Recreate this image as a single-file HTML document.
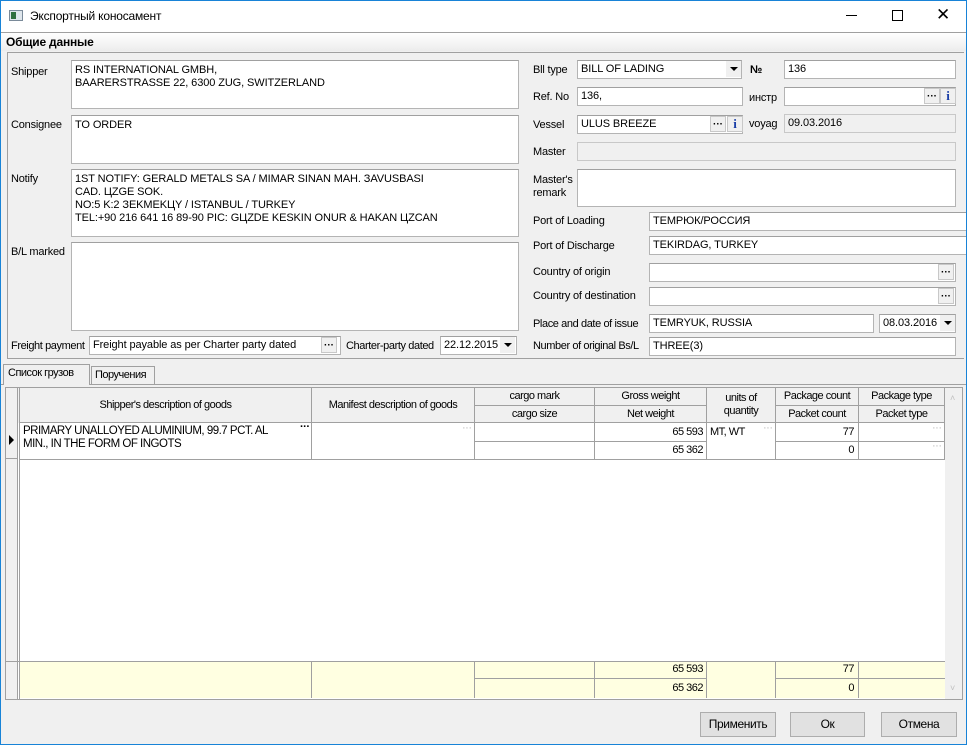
<!DOCTYPE html>
<html><head><meta charset="utf-8"><style>
*{box-sizing:border-box;margin:0;padding:0}
body{width:967px;height:745px;background:#f0f0f0;font-family:"Liberation Sans",sans-serif;font-size:11px;color:#000;position:relative;overflow:hidden}
.a{position:absolute}
.win{position:absolute;left:0;top:0;width:967px;height:745px;border:1px solid #1883d7;pointer-events:none;z-index:9}
.in{position:absolute;background:#fff;border:1px solid #b4b4b4;border-top-color:#a0a0a0;padding:2px 3px;font-size:11px;white-space:nowrap;overflow:hidden;letter-spacing:-0.1px}
.dis{background:#f0f0f0;border-color:#c8c8c8}
.lb{position:absolute;font-size:11px;white-space:nowrap;letter-spacing:-0.2px}
.btn{position:absolute;width:16px;height:16px;background:#f0f0f0;border:1px solid #c8c8c8;font-size:10px;line-height:15px;text-align:center;font-weight:bold}
.i{color:#1a3ea8;font-family:"Liberation Serif",serif;font-size:13px;line-height:14px}
.dd{position:absolute;width:15px;height:16px;background:#f0f0f0}
.dd:after{content:"";position:absolute;left:4px;top:6px;border-left:4px solid transparent;border-right:4px solid transparent;border-top:4px solid #000}
.g{position:absolute;font-size:11px;letter-spacing:-0.5px;white-space:nowrap}
.c{position:absolute;border-right:1px solid #a0a0a0;border-bottom:1px solid #a0a0a0;font-size:11px;letter-spacing:-0.5px;white-space:nowrap}
.pb{position:absolute;height:25px;background:#e1e1e1;border:1px solid #adadad;text-align:center;line-height:23px;font-size:12px;letter-spacing:-0.4px}
</style></head><body>
<div class="win"></div>
<div class="a" style="left:1px;top:1px;width:965px;height:31px;background:#fff"></div>
<div class="a" style="left:9px;top:10px;width:14px;height:11px;background:#dfe6ec;border:1px solid #7a8a99"><div class="a" style="left:1px;top:1px;width:5px;height:7px;background:#2f6f3f"></div></div>
<div class="lb" style="left:30px;top:9px;font-size:12px">Экспортный коносамент</div>
<div class="a" style="left:846px;top:15px;width:11px;height:1px;background:#000"></div>
<div class="a" style="left:892px;top:10px;width:11px;height:11px;border:1px solid #000"></div>
<div class="lb" style="left:936px;top:5px;font-size:17px;font-weight:300">✕</div>
<div class="a" style="left:1px;top:32px;width:965px;height:19px;background:linear-gradient(#fff,#ececec);border-top:1px solid #a0a0a0"></div>
<div class="lb" style="left:6px;top:35px;font-weight:bold;font-size:12px">Общие данные</div>
<div class="a" style="left:7px;top:52px;width:957px;height:307px;border:1px solid #a0a0a0;border-right:none"></div>

<div class="lb" style="left:11px;top:66px">Shipper</div>
<div class="in" style="left:71px;top:60px;width:448px;height:49px;line-height:13px;padding-top:3px">RS INTERNATIONAL GMBH,<br>BAARERSTRASSE 22, 6300 ZUG, SWITZERLAND</div>
<div class="lb" style="left:11px;top:119px">Consignee</div>
<div class="in" style="left:71px;top:115px;width:448px;height:49px;padding-top:3px">TO ORDER</div>
<div class="lb" style="left:11px;top:173px">Notify</div>
<div class="in" style="left:71px;top:169px;width:448px;height:68px;line-height:13px;padding-top:3px">1ST NOTIFY: GERALD METALS SA / MIMAR SINAN MAH. ЗAVUSBASI<br>CAD. ЦZGE SOK.<br>NO:5 K:2 ЗEKMEKЦY / ISTANBUL / TURKEY<br>TEL:+90 216 641 16 89-90 PIC: GЦZDE KESKIN ONUR &amp; HAKAN ЦZCAN</div>
<div class="lb" style="left:11px;top:246px">B/L marked</div>
<div class="in" style="left:71px;top:242px;width:448px;height:89px"></div>
<div class="lb" style="left:11px;top:340px;letter-spacing:-0.4px">Freight payment</div>
<div class="in" style="left:89px;top:336px;width:252px;height:19px">Freight payable as per Charter party dated</div>
<div class="btn" style="left:321px;top:337px">···</div>
<div class="lb" style="left:346px;top:340px;letter-spacing:-0.4px">Charter-party dated</div>
<div class="in" style="left:440px;top:336px;width:77px;height:19px">22.12.2015</div>
<div class="dd" style="left:500px;top:337px"></div>

<div class="lb" style="left:533px;top:64px">Bll type</div>
<div class="in" style="left:577px;top:60px;width:165px;height:19px">BILL OF LADING</div>
<div class="dd" style="left:726px;top:61px"></div>
<div class="lb" style="left:750px;top:64px;font-weight:bold">№</div>
<div class="in" style="left:784px;top:60px;width:172px;height:19px">136</div>
<div class="lb" style="left:533px;top:91px">Ref. No</div>
<div class="in" style="left:577px;top:87px;width:166px;height:19px">136,</div>
<div class="lb" style="left:749px;top:92px">инстр</div>
<div class="in" style="left:784px;top:87px;width:172px;height:19px"></div>
<div class="btn" style="left:924px;top:88px">···</div>
<div class="btn i" style="left:940px;top:88px">i</div>
<div class="lb" style="left:533px;top:119px">Vessel</div>
<div class="in" style="left:577px;top:115px;width:166px;height:19px">ULUS BREEZE</div>
<div class="btn" style="left:710px;top:116px">···</div>
<div class="btn i" style="left:727px;top:116px">i</div>
<div class="lb" style="left:749px;top:118px">voyag</div>
<div class="in dis" style="left:784px;top:114px;width:172px;height:19px">09.03.2016</div>
<div class="lb" style="left:533px;top:146px">Master</div>
<div class="in dis" style="left:577px;top:142px;width:379px;height:19px"></div>
<div class="lb" style="left:533px;top:174px;line-height:13px">Master's<br>remark</div>
<div class="in" style="left:577px;top:169px;width:379px;height:38px"></div>
<div class="lb" style="left:533px;top:215px">Port of Loading</div>
<div class="in" style="left:649px;top:212px;width:320px;height:19px">ТЕМРЮК/РОССИЯ</div>
<div class="lb" style="left:533px;top:240px">Port of Discharge</div>
<div class="in" style="left:649px;top:236px;width:320px;height:19px">TEKIRDAG, TURKEY</div>
<div class="lb" style="left:533px;top:266px">Country of origin</div>
<div class="in" style="left:649px;top:263px;width:307px;height:19px"></div>
<div class="btn" style="left:938px;top:264px">···</div>
<div class="lb" style="left:533px;top:290px">Country of destination</div>
<div class="in" style="left:649px;top:287px;width:307px;height:19px"></div>
<div class="btn" style="left:938px;top:288px">···</div>
<div class="lb" style="left:533px;top:318px;letter-spacing:-0.4px">Place and date of issue</div>
<div class="in" style="left:649px;top:314px;width:225px;height:19px">TEMRYUK, RUSSIA</div>
<div class="in" style="left:879px;top:314px;width:77px;height:19px">08.03.2016</div>
<div class="dd" style="left:940px;top:315px"></div>
<div class="lb" style="left:533px;top:340px;letter-spacing:-0.4px">Number of original Bs/L</div>
<div class="in" style="left:649px;top:337px;width:307px;height:19px">THREE(3)</div>

<div class="a" style="left:1px;top:384px;width:965px;height:1px;background:#a0a0a0"></div>
<div class="a" style="left:3px;top:364px;width:87px;height:21px;background:#f0f0f0;border:1px solid #a0a0a0;border-bottom:none"></div>
<div class="g" style="left:8px;top:367px">Список грузов</div>
<div class="a" style="left:91px;top:366px;width:64px;height:19px;border:1px solid #a0a0a0;border-bottom:none"></div>
<div class="g" style="left:95px;top:369px">Поручения</div>

<div class="a" style="left:5px;top:387px;width:958px;height:313px;background:#fff;border:1px solid #a0a0a0"></div>
<div class="a" style="left:6px;top:388px;width:939px;height:35px;background:#f0f0f0"></div>
<div class="a" style="left:6px;top:388px;width:12px;height:311px;background:#f0f0f0;border-right:1px solid #a0a0a0"></div>
<div class="a" style="left:19px;top:388px;width:1px;height:311px;background:#a0a0a0"></div>
<div class="a" style="left:945px;top:388px;width:17px;height:311px;background:#f0f0f0"></div>
<div class="g" style="left:950px;top:393px;color:#c0c0c0;font-size:9px">˄</div>
<div class="g" style="left:950px;top:683px;color:#c0c0c0;font-size:9px">˅</div>
<div class="a" style="left:20px;top:661px;width:925px;height:37px;background:#ffffe1"></div>
<div class="c" style="left:20px;top:388px;width:292px;height:35px;text-align:center;line-height:35px">Shipper's description of goods</div>
<div class="c" style="left:312px;top:388px;width:163px;height:35px;text-align:center;line-height:35px">Manifest description of goods</div>
<div class="c" style="left:475px;top:388px;width:120px;height:18px;text-align:center;line-height:17px">cargo mark</div>
<div class="c" style="left:475px;top:406px;width:120px;height:17px;text-align:center;line-height:17px">cargo size</div>
<div class="c" style="left:595px;top:388px;width:112px;height:18px;text-align:center;line-height:17px">Gross weight</div>
<div class="c" style="left:595px;top:406px;width:112px;height:17px;text-align:center;line-height:17px">Net weight</div>
<div class="c" style="left:707px;top:388px;width:69px;height:35px;text-align:center;line-height:13px;padding-top:4px">units of<br>quantity</div>
<div class="c" style="left:776px;top:388px;width:83px;height:18px;text-align:center;line-height:17px">Package count</div>
<div class="c" style="left:776px;top:406px;width:83px;height:17px;text-align:center;line-height:17px">Packet count</div>
<div class="c" style="left:859px;top:388px;width:86px;height:18px;text-align:center;line-height:17px">Package type</div>
<div class="c" style="left:859px;top:406px;width:86px;height:17px;text-align:center;line-height:17px">Packet type</div>
<div class="a" style="left:6px;top:423px;width:12px;height:36px;border-bottom:1px solid #a0a0a0"></div>
<div class="a" style="left:9px;top:435px;border-top:5px solid transparent;border-bottom:5px solid transparent;border-left:5px solid #000"></div>
<div class="c" style="left:20px;top:423px;width:292px;height:37px;line-height:13px;padding:2px 3px;font-size:11.5px">PRIMARY UNALLOYED ALUMINIUM, 99.7 PCT. AL<br>MIN., IN THE FORM OF INGOTS</div>
<div class="g" style="left:300px;top:421px;font-weight:bold">···</div>
<div class="c" style="left:312px;top:423px;width:163px;height:37px"></div>
<div class="g" style="left:462px;top:422px;color:#bbb">···</div>
<div class="c" style="left:475px;top:423px;width:120px;height:19px"></div>
<div class="c" style="left:475px;top:442px;width:120px;height:18px"></div>
<div class="c" style="left:595px;top:423px;width:112px;height:19px;text-align:right;padding-right:3px;line-height:18px">65 593</div>
<div class="c" style="left:595px;top:442px;width:112px;height:18px;text-align:right;padding-right:3px;line-height:17px">65 362</div>
<div class="c" style="left:707px;top:423px;width:69px;height:37px;padding-left:3px;line-height:18px">MT, WT</div>
<div class="g" style="left:763px;top:422px;color:#bbb">···</div>
<div class="c" style="left:776px;top:423px;width:83px;height:19px;text-align:right;padding-right:4px;line-height:18px">77</div>
<div class="c" style="left:776px;top:442px;width:83px;height:18px;text-align:right;padding-right:4px;line-height:17px">0</div>
<div class="c" style="left:859px;top:423px;width:86px;height:19px"></div>
<div class="c" style="left:859px;top:442px;width:86px;height:18px"></div>
<div class="g" style="left:932px;top:422px;color:#bbb">···</div>
<div class="g" style="left:932px;top:440px;color:#bbb">···</div>
<div class="a" style="left:6px;top:661px;width:939px;height:1px;background:#a0a0a0"></div>
<div class="c" style="left:20px;top:661px;width:292px;height:37px;border-bottom:none"></div>
<div class="c" style="left:312px;top:661px;width:163px;height:37px;border-bottom:none"></div>
<div class="c" style="left:475px;top:661px;width:120px;height:18px"></div>
<div class="c" style="left:475px;top:679px;width:120px;height:19px;border-bottom:none"></div>
<div class="c" style="left:595px;top:661px;width:112px;height:18px;text-align:right;padding-right:3px;line-height:17px">65 593</div>
<div class="c" style="left:595px;top:679px;width:112px;height:19px;text-align:right;padding-right:3px;line-height:18px;border-bottom:none">65 362</div>
<div class="c" style="left:707px;top:661px;width:69px;height:37px;border-bottom:none"></div>
<div class="c" style="left:776px;top:661px;width:83px;height:18px;text-align:right;padding-right:4px;line-height:17px">77</div>
<div class="c" style="left:776px;top:679px;width:83px;height:19px;text-align:right;padding-right:4px;line-height:18px;border-bottom:none">0</div>
<div class="c" style="left:859px;top:661px;width:86px;height:18px;border-right:none"></div>

<div class="pb" style="left:700px;top:712px;width:76px">Применить</div>
<div class="pb" style="left:790px;top:712px;width:75px">Ок</div>
<div class="pb" style="left:881px;top:712px;width:76px">Отмена</div>
</body></html>
